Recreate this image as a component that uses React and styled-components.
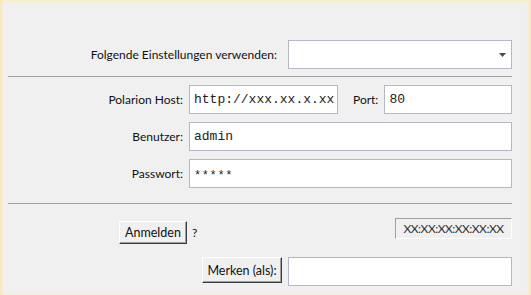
import React from "react";
import styled, { createGlobalStyle } from "styled-components";

const Global = createGlobalStyle`
  html, body { margin: 0; padding: 0; height: 100%; }
  body { background: #f0f0f0; }
  #root { height: 100%; }
`;

const Page = styled.div`
  box-sizing: border-box;
  width: 531px;
  height: 295px;
  background: #f0f0f0;
  box-shadow: inset 3px 0 3px -1px #f9e7b4, inset -3px 0 3px -1px #f9e7b4, inset 0 3px 3px -1px #fbf0cf;
  padding: 40px 19px 0 8px;
  font-family: Lato, "Noto Sans", sans-serif;
  font-size: 12px;
  color: #111;
  overflow: hidden;
`;

const TopRow = styled.div`
  display: flex;
  justify-content: flex-end;
  align-items: center;
  gap: 11px;
  height: 29px;
`;

const Label = styled.span`
  white-space: nowrap;
  text-align: right;
  padding-left: ${(p) => p.$pl || 0}px;
`;

const Combo = styled.div`
  box-sizing: border-box;
  width: 224px;
  height: 29px;
  background: #fff;
  border: 1px solid #b4b8c6;
  display: flex;
  justify-content: flex-end;
  align-items: center;
  padding-right: 5px;
`;

const Separator = styled.div`
  height: 0;
  border-top: 1px solid #a3a3a3;
  margin: ${(p) => p.$m};
`;

const FormGrid = styled.div`
  display: grid;
  grid-template-columns: 175px 149px auto 1fr;
  column-gap: 6px;
  row-gap: 8px;
  align-items: center;
`;

const Field = styled.div`
  box-sizing: border-box;
  height: 29px;
  background: #fff;
  border: 1px solid #b4b8c6;
  display: flex;
  align-items: center;
  padding-left: 4px;
  font-family: "Liberation Mono", "Courier New", monospace;
  font-size: 13px;
  color: #222;
  white-space: nowrap;
  overflow: hidden;
  grid-column: ${(p) => p.$span || "auto"};
`;

const Pass = styled.span`
  font-size: 12px;
  letter-spacing: 0.6px;
  position: relative;
  top: 2px;
`;

const ActionRow = styled.div`
  display: flex;
  align-items: flex-start;
  height: ${(p) => p.$h}px;
  padding-left: ${(p) => p.$pl}px;
  margin-top: ${(p) => p.$mt || 0}px;
`;

const Button = styled.button`
  box-sizing: border-box;
  height: ${(p) => p.$h}px;
  width: ${(p) => p.$w}px;
  margin-top: ${(p) => p.$mt || 0}px;
  padding: 0;
  background: #f0f0f0;
  border: 1px solid;
  border-color: #ffffff #3c3c3c #3c3c3c #ffffff;
  box-shadow: inset -1px -1px 0 #a0a0a0;
  font-family: Lato, "Noto Sans", sans-serif;
  font-size: 12.5px;
  color: #111;
  cursor: default;
`;

const Question = styled.span`
  margin-left: 5px;
  margin-top: 7px;
`;

const Spacer = styled.div`
  flex: 1;
`;

const MacBox = styled.div`
  box-sizing: border-box;
  width: 117px;
  height: 21px;
  border: 1px solid;
  border-color: #a0a0a0 #ffffff #ffffff #a0a0a0;
  display: flex;
  align-items: center;
  justify-content: center;
  font-size: 12px;
  letter-spacing: -0.5px;
  color: #333;
`;

const MemoField = styled.div`
  box-sizing: border-box;
  height: 29px;
  flex: 1;
  margin-left: 6px;
  background: #fff;
  border: 1px solid #b4b8c6;
`;

export default function App() {
  return (
    <>
      <Global />
      <Page>
        <TopRow>
          <Label>Folgende Einstellungen verwenden:</Label>
          <Combo>
            <svg width="7" height="4" viewBox="0 0 7 4">
              <path d="M0 0 H7 L3.5 4 Z" fill="#4a4a4a" />
            </svg>
          </Combo>
        </TopRow>
        <Separator $m="7px 0 8px 0" />
        <FormGrid>
          <Label>Polarion Host:</Label>
          <Field>http://xxx.xx.x.xx</Field>
          <Label $pl={9}>Port:</Label>
          <Field>80</Field>
          <Label>Benutzer:</Label>
          <Field $span="2 / 5">admin</Field>
          <Label>Passwort:</Label>
          <Field $span="2 / 5">
            <Pass>*****</Pass>
          </Field>
        </FormGrid>
        <Separator $m="15px 0 0 0" />
        <ActionRow $h={39} $pl={111} $mt={14}>
          <Button $h={23} $w={68} $mt={3}>Anmelden</Button>
          <Question>?</Question>
          <Spacer />
          <MacBox>XX:XX:XX:XX:XX:XX</MacBox>
        </ActionRow>
        <ActionRow $h={29} $pl={194}>
          <Button $h={26} $w={80}>Merken (als):</Button>
          <MemoField />
        </ActionRow>
      </Page>
    </>
  );
}
